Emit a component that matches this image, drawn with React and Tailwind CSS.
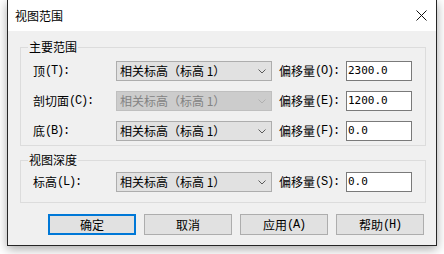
import React from "react";

const CJK = "font-['Noto_Sans_CJK_SC',sans-serif]";
const MONO = "font-['Liberation_Mono',monospace] tracking-[-1.2px]";

function Lbl({ cn, lat, className = "" }) {
  return (
    <div className={"flex items-center text-[12px] leading-[20px] text-black whitespace-nowrap " + className}>
      <span className={CJK}>{cn}</span>
      <span className={MONO}>{lat}</span>
    </div>
  );
}

function Chevron({ color }) {
  return (
    <svg width="8" height="5" viewBox="0 0 8 5" className="shrink-0">
      <polyline points="0.5,0.5 4,4 7.5,0.5" fill="none" stroke={color} strokeWidth="1" />
    </svg>
  );
}

function Select({ disabled }) {
  return (
    <div
      className={
        "w-[156px] h-[20px] flex items-center justify-between pl-[3px] pr-[5px] border " +
        (disabled ? "bg-[#cccccc] border-[#bfbfbf] text-[#838383]" : "bg-[#e1e1e1] border-[#adadad] text-black")
      }
    >
      <span className={CJK + " text-[12px] leading-[18px] whitespace-nowrap"}>相关标高（标高 1）</span>
      <Chevron color={disabled ? "#b0b0b0" : "#5a5a5a"} />
    </div>
  );
}

function Input({ value }) {
  return (
    <div className="w-[66px] h-[20px] bg-white border border-[#7a7a7a] pl-[1px] flex items-center">
      <span className="font-['DejaVu_Sans_Mono',monospace] text-[11px] leading-[18px] text-black">{value}</span>
    </div>
  );
}

function Row({ cn, lat, offLat, value, disabled }) {
  return (
    <div className="flex items-center h-[20px] pl-[12px]">
      <Lbl cn={cn} lat={lat} className="w-[83px]" />
      <Select disabled={disabled} />
      <Lbl cn="偏移量" lat={offLat} className="w-[67px] ml-[7px]" />
      <Input value={value} />
    </div>
  );
}

function Group({ title, className, children }) {
  return (
    <div className={"relative w-[406px] border border-[#dcdcdc] " + className}>
      <div className={"absolute left-[7px] top-[-9px] px-[1px] bg-[#f0f0f0] text-[12px] leading-[16px] text-black " + CJK}>
        {title}
      </div>
      {children}
    </div>
  );
}

function Button({ children, primary }) {
  return (
    <div
      className={
        "w-[88px] h-[21px] flex items-center justify-center bg-[#e1e1e1] text-[12px] text-black " +
        (primary ? "border-2 border-[#0078d7]" : "border border-[#adadad]")
      }
    >
      {children}
    </div>
  );
}

export default function App() {
  return (
    <div className="w-[444px] h-[254px] bg-white overflow-hidden">
      <div className="ml-[7px] w-[430px] border-x border-b border-[#262626] shadow-[0_3px_10px_rgba(0,0,0,0.35)]">
        <div className="h-[31px] bg-white flex items-center justify-between pl-[7px] pr-[9px]">
          <span className={CJK + " text-[12px] leading-[16px] text-black"}>视图范围</span>
          <svg width="11" height="11" viewBox="0 0 11 11">
            <path d="M0.5 0.5 L10.5 10.5 M10.5 0.5 L0.5 10.5" stroke="#111" strokeWidth="1" fill="none" />
          </svg>
        </div>
        <div className="h-[214px] bg-[#f0f0f0] pl-[12px] pt-[16px]">
          <Group title="主要范围" className="h-[99px] pt-[13px] flex flex-col gap-[10px]">
            <Row cn="顶" lat="(T):" offLat="(O):" value="2300.0" />
            <Row cn="剖切面" lat="(C):" offLat="(E):" value="1200.0" disabled />
            <Row cn="底" lat="(B):" offLat="(F):" value="0.0" />
          </Group>
          <Group title="视图深度" className="h-[43px] mt-[14px] pt-[11px]">
            <Row cn="标高" lat="(L):" offLat="(S):" value="0.0" />
          </Group>
          <div className="mt-[11px] pl-[28px] flex gap-[8px]">
            <Button primary>
              <span className={CJK}>确定</span>
            </Button>
            <Button>
              <span className={CJK}>取消</span>
            </Button>
            <Button>
              <span className={CJK}>应用</span>
              <span className={MONO}>(A)</span>
            </Button>
            <Button>
              <span className={CJK}>帮助</span>
              <span className={MONO}>(H)</span>
            </Button>
          </div>
        </div>
      </div>
    </div>
  );
}
